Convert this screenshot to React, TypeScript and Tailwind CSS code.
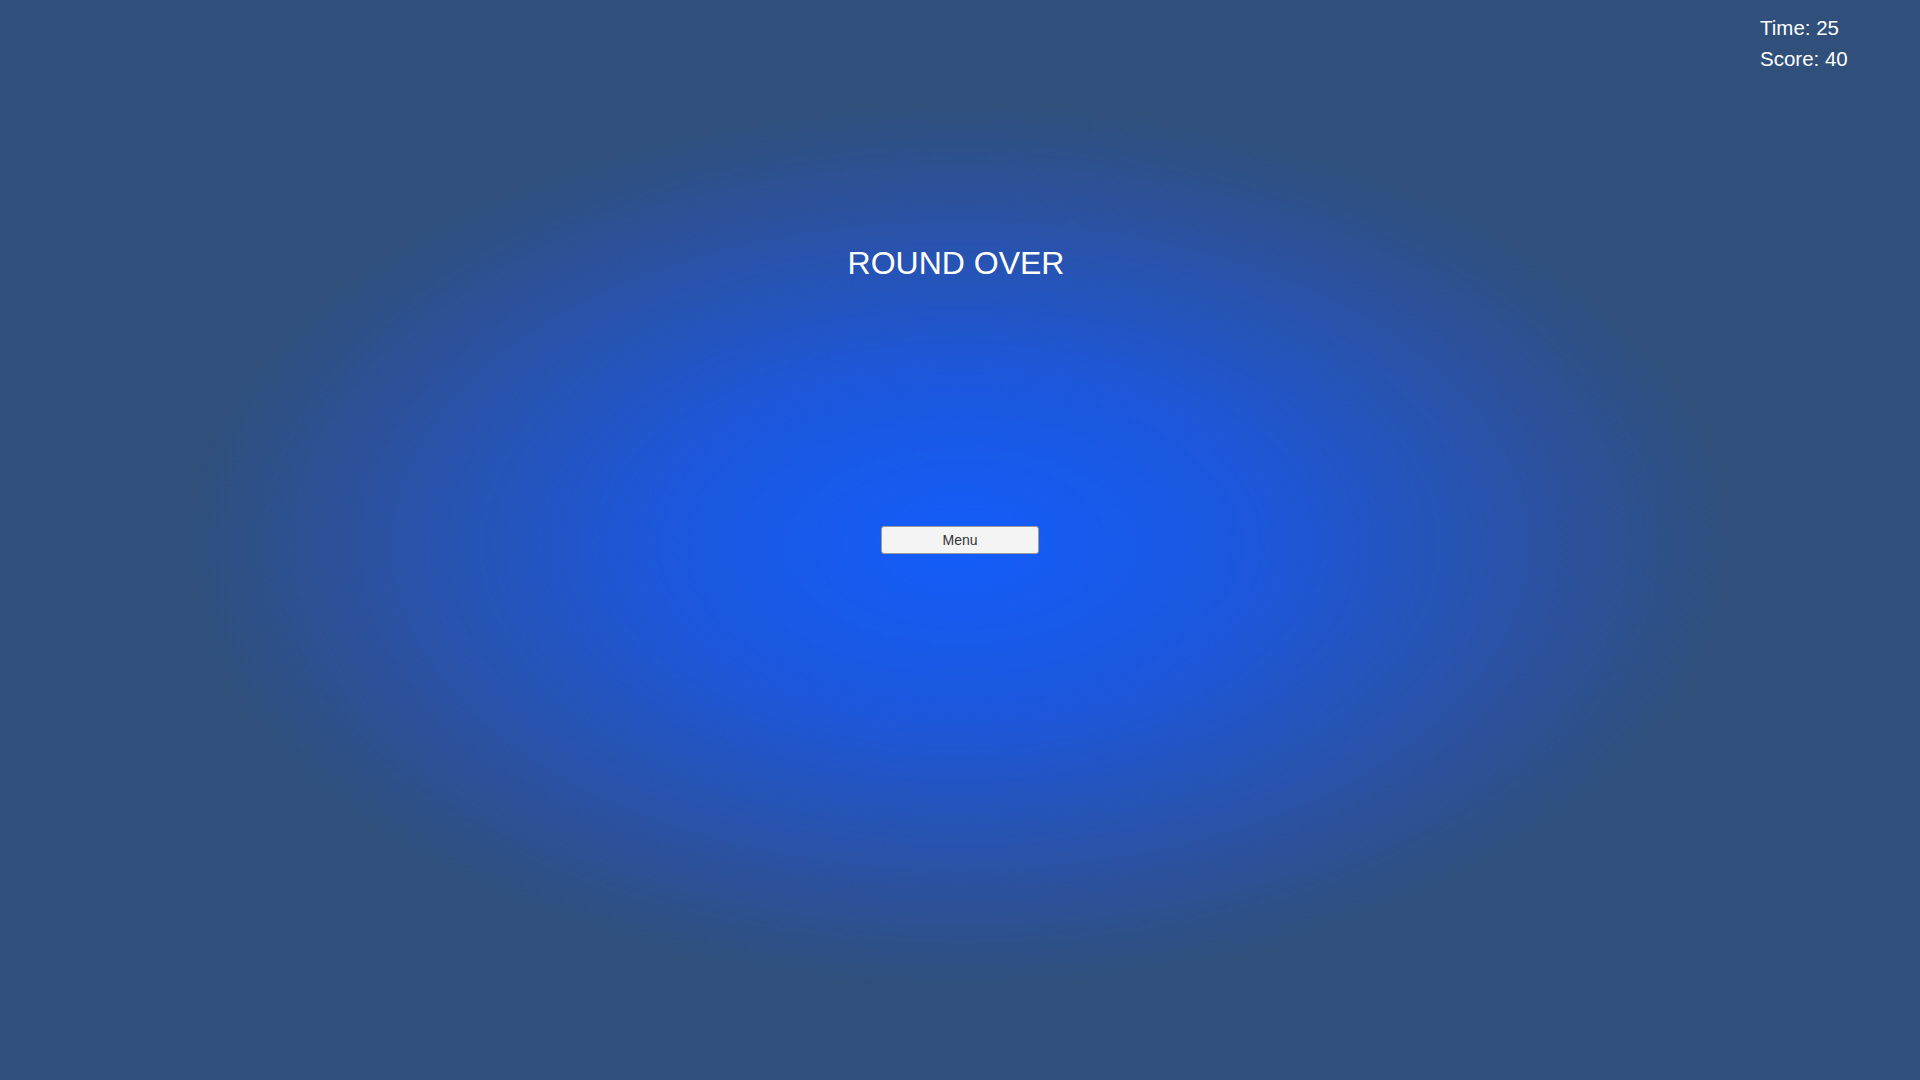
export default function App() {
  return (
    <div
      className="relative w-full h-[1080px] overflow-hidden font-['Liberation_Sans',Arial,sans-serif] bg-[#304f7a]"
    >
      {/* radial glow */}
      <div className="absolute inset-0 bg-[radial-gradient(ellipse_780px_445px_at_50%_50.5%,#135dfa_0%,#1c57dc_38%,#2a52a6_72%,#304f7a_100%)]" />

      {/* HUD */}
      <div className="absolute top-[12px] left-[1760px] text-white text-[20.5px] leading-[31px]">
        <div>Time: 25</div>
        <div>Score: 40</div>
      </div>

      <div className="relative flex flex-col items-center pt-[248px]">
        <h1 className="text-white text-[32px] leading-[30px] pr-[8px]">ROUND OVER</h1>
        <button className="mt-[248px] w-[158px] h-[28px] rounded-[3px] bg-[#f4f4f4] border border-[#9a9a9a] text-[#333333] text-[14px] leading-none flex items-center justify-center">
          Menu
        </button>
      </div>
    </div>
  );
}
